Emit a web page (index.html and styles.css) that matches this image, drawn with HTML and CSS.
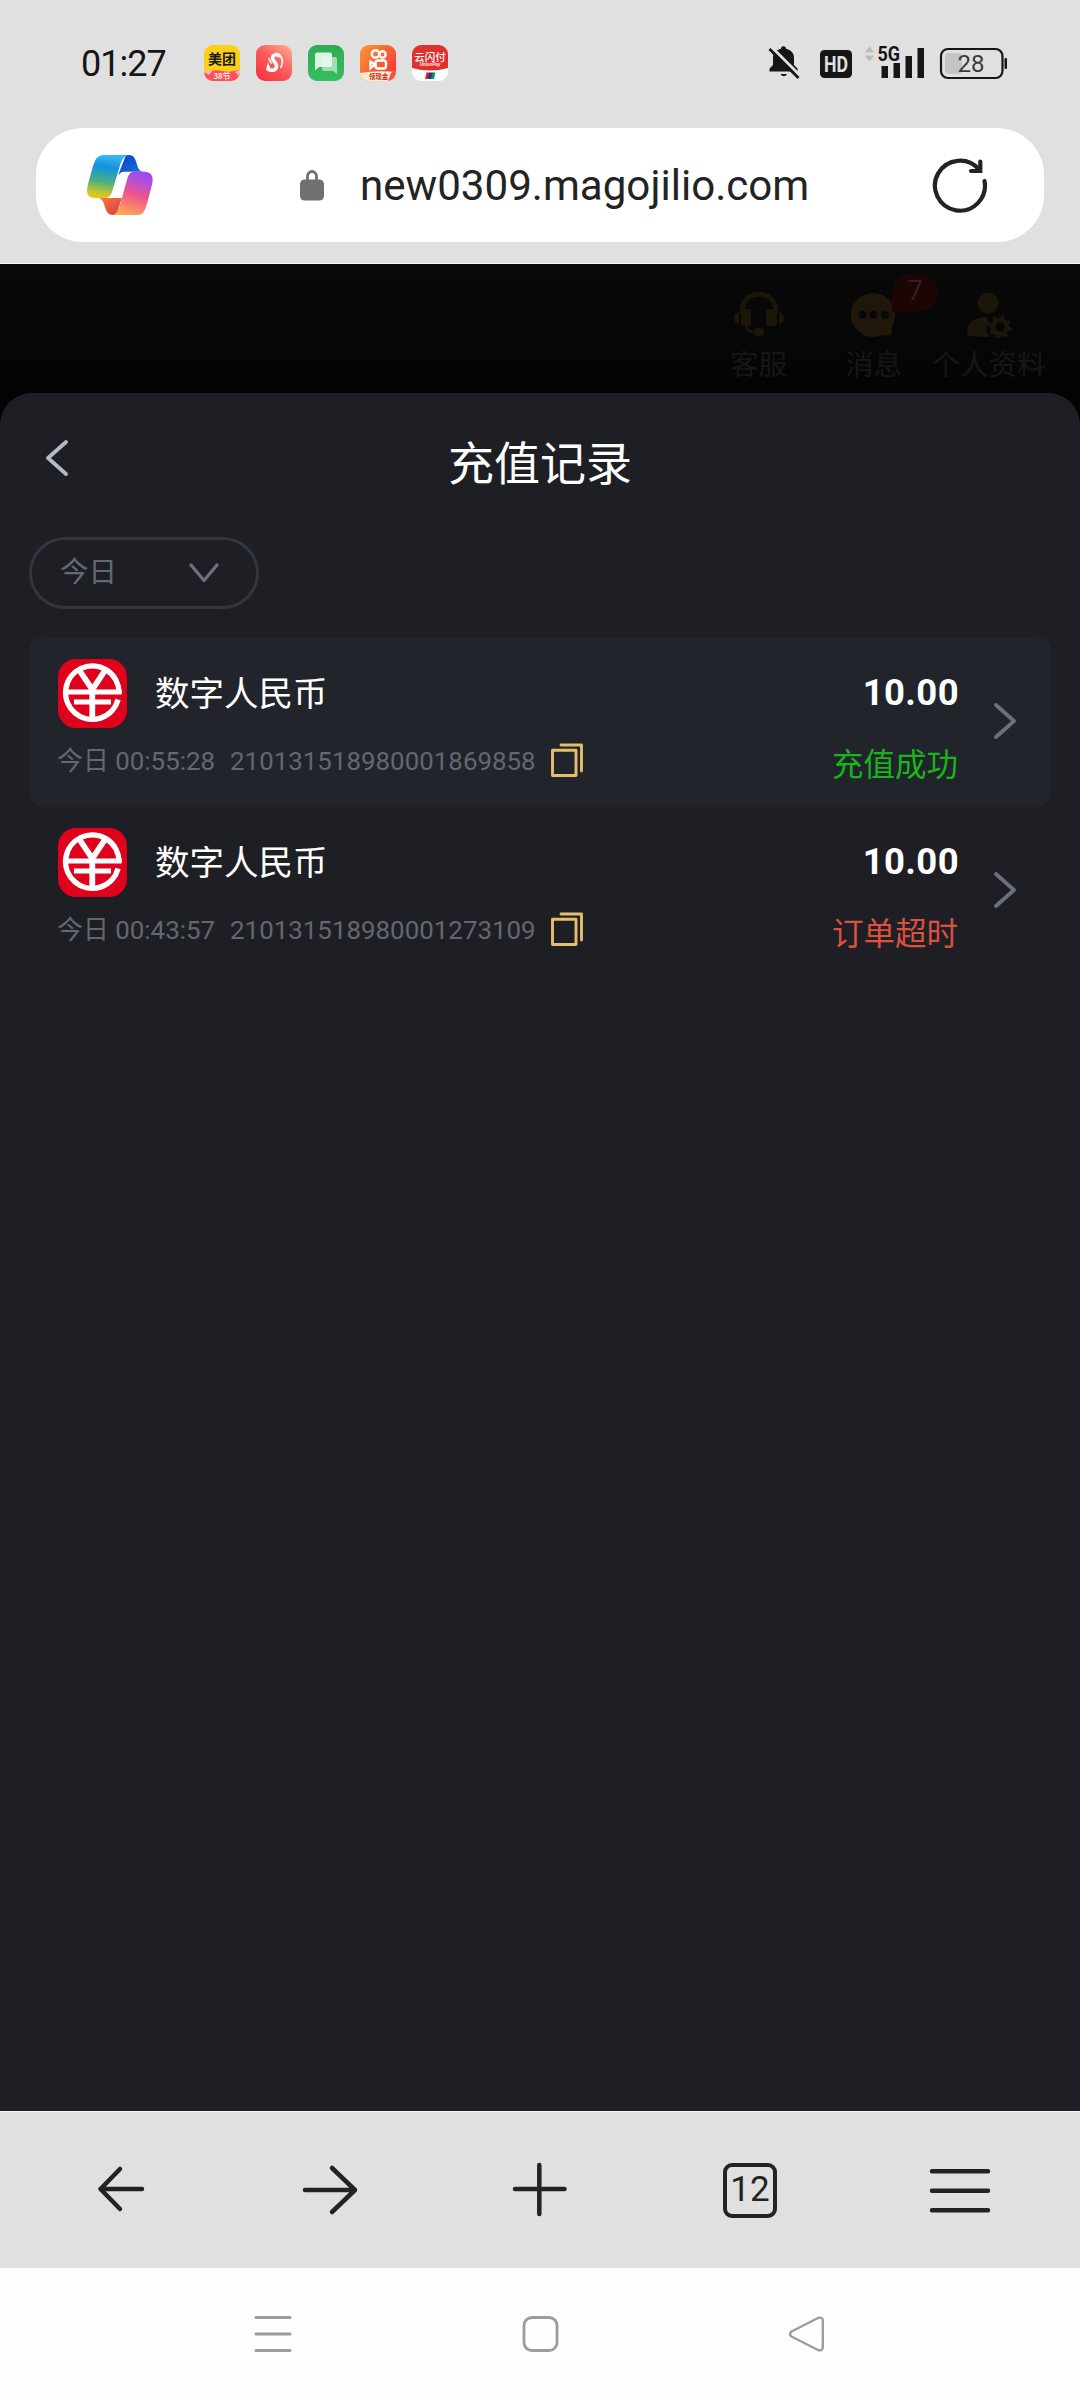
FILE: index.html
```html
<!DOCTYPE html>
<html lang="zh-CN">
<head>
<meta charset="utf-8">
<title>充值记录</title>
<link rel="stylesheet" href="styles.css">
</head>
<body>
<svg class="defs" width="0" height="0" aria-hidden="true">
  <symbol id="ecny" viewBox="0 0 69 69">
    <rect width="69" height="69" rx="18" fill="#e0021c"/>
    <path d="M61 33.700A26.700 26.700 0 1 0 60.100 40.500" fill="none" stroke="#fff" stroke-width="5.400"/>
    <path d="M21.500 11.500 34.300 30.500 47 11.500M34.300 28V61" fill="none" stroke="#fff" stroke-width="5.800"/>
    <path d="M9 32.900H63.700M16 43H53" fill="none" stroke="#fff" stroke-width="5"/>
  </symbol>
  <symbol id="copy" viewBox="0 0 32 35">
    <path d="M1.500 7.200H25V32.500H1.500zM10 2H30.500V28" fill="none" stroke="#e6bd6a" stroke-width="2.900" stroke-linejoin="round" stroke-linecap="round"/>
  </symbol>
  <symbol id="next" viewBox="0 0 22 36">
    <path d="M2 2 20 18 2 34" fill="none" stroke="#6b717c" stroke-width="3.700" stroke-linecap="round" stroke-linejoin="round"/>
  </symbol>
</svg>

<header class="status">
  <span class="clock">01:27</span>
  <div class="apps">
    <svg width="36" height="36" viewBox="0 0 36 36">
      <defs><clipPath id="r"><rect width="36" height="36" rx="9"/></clipPath></defs>
      <g clip-path="url(#r)"><rect width="36" height="36" fill="#fbd116"/><path d="M0 28q8-4 18-2t18-2v12H0z" fill="#f9525f"/><path d="M0 27q4-3 8-1l-3 4zM31 27l5-3v8z" fill="#ffb3b8"/></g>
      <text x="18" y="18.500" class="t-mt" text-anchor="middle">美团</text>
      <text x="18" y="33.500" class="t-38" text-anchor="middle">38节</text>
    </svg>
    <svg width="36" height="36" viewBox="0 0 36 36">
      <defs><linearGradient id="g2" x1="1" y1="0" x2="0.2" y2="1"><stop offset="0" stop-color="#ffb393"/><stop offset=".5" stop-color="#fb5d5e"/><stop offset="1" stop-color="#f7343f"/></linearGradient></defs>
      <rect width="36" height="36" rx="9" fill="url(#g2)"/>
      <path d="M23 10.500c-2-1.500-6.500-1-6.500 2.500s4.500 4.500 4 8.500-4 4.500-7 3" fill="none" stroke="#fff" stroke-width="3.600" stroke-linecap="round"/>
      <path d="M22.500 9.500c5 3 4.500 8.500 2.500 13M13 13.500q.5 2.500 2.500 4.500" fill="none" stroke="#fff" stroke-width="1.600" stroke-linecap="round"/>
      <path d="M12.500 17q-2 4.500-2.500 8 4 3 8 1.500-5-3-5.500-9.500z" fill="#fff"/>
    </svg>
    <svg width="36" height="36" viewBox="0 0 36 36">
      <defs><linearGradient id="g3" x1="0" y1="0" x2="0" y2="1"><stop offset="0" stop-color="#2eab53"/><stop offset="1" stop-color="#36bd60"/></linearGradient></defs>
      <rect width="36" height="36" rx="9" fill="url(#g3)"/>
      <path d="M16 12h11q2 0 2 2v15l-4-3h-9q-2 0-2-2V14q0-2 2-2z" fill="#a1deb3"/>
      <path d="M9 7.500h13q2 0 2 2v10.500q0 2-2 2H11l-4 3.500V9.500q0-2 2-2z" fill="#e7f8ec" fill-opacity=".95"/>
    </svg>
    <svg width="36" height="36" viewBox="0 0 36 36">
      <defs><linearGradient id="g4" x1="0" y1="0" x2="1" y2=".8"><stop offset="0" stop-color="#fb9a2d"/><stop offset="1" stop-color="#f5333c"/></linearGradient></defs>
      <g clip-path="url(#r)"><rect width="36" height="36" fill="url(#g4)"/><path d="M0 28q17-3 36-1v9H0z" fill="#fff0cf"/><path d="M31 28l5-4v12h-8z" fill="#f4513d"/></g>
      <g fill="none" stroke="#fff" stroke-width="2.400"><circle cx="15.500" cy="9" r="3.700"/><circle cx="22.500" cy="9.500" r="3.200"/><rect x="15.500" y="15.500" width="10.500" height="8" rx="2.500"/><path d="M15 19.500l-4.500-3v6.500z"/></g>
      <text x="18.500" y="34" class="t-ks" text-anchor="middle">领现金</text>
    </svg>
    <svg width="36" height="36" viewBox="0 0 36 36">
      <g clip-path="url(#r)"><rect width="36" height="36" fill="#fff"/><path d="M0 0h36v23q-18 5-36 0z" fill="#e2302e"/></g>
      <path d="M14.500 27.500h3.500l-1.500 6.500h-3.500z" fill="#c8243a"/><path d="M17.500 27.500h3.500l-1.500 6.500h-3.500z" fill="#143e70"/><path d="M20.500 27.500h3l-1.500 6.500h-3z" fill="#12837f"/>
      <text x="18" y="15.500" class="t-up" text-anchor="middle">云闪付</text>
      <text x="18" y="21" class="t-us" text-anchor="middle">UnionPay</text>
    </svg>
  </div>
  <svg class="sys" width="240" height="46" viewBox="768 39 240 46">
    <path d="M769.500 70.500v-3l3.500-3.500v-7q0-7.500 8-9.300a2.500 2.500 0 0 1 5 0q8 1.800 8 9.300v7l3.500 3.500v3z" fill="#161616"/>
    <path d="M780.500 73h6.500a3.300 2.600 0 0 1-6.500 0z" fill="#161616"/>
    <path d="M771 45.500 801 75.500" stroke="#e0e0e0" stroke-width="3"/>
    <path d="M769.500 48 798.500 77" stroke="#161616" stroke-width="2.800"/>
    <rect x="820" y="49" width="32" height="28" rx="4.500" fill="#161616"/>
    <text x="836" y="70.500" class="t-hd" text-anchor="middle" textLength="24" lengthAdjust="spacingAndGlyphs">HD</text>
    <path d="M864.500 51.500l5-6 5 6zM864.500 54.500l5 6 5-6z" fill="#bdbdbd"/>
    <text x="877.500" y="60" class="t-5g" textLength="22.500" lengthAdjust="spacingAndGlyphs">5G</text>
    <path d="M881.500 65h6.500v12h-6.500zM893.500 62h6.500v15h-6.500zM905.500 55h6.500v22h-6.500zM917.500 47h6.500v30h-6.500z" fill="#161616"/>
    <rect x="941" y="48" width="61.500" height="29" rx="7" fill="none" stroke="#161616" stroke-width="2.200"/>
    <rect x="945" y="52" width="17" height="21" rx="4" fill="#c4c4c4"/>
    <rect x="1004.500" y="57" width="2.500" height="11" rx="1" fill="#161616"/>
    <text x="971" y="71" class="t-bat" text-anchor="middle">28</text>
  </svg>
</header>

<div class="urlrow">
  <div class="urlbar">
    <svg class="copilot" width="68" height="62" viewBox="86 154 68 62">
      <defs>
        <linearGradient id="ca" x1=".3" y1="0" x2=".15" y2="1"><stop offset="0" stop-color="#35b8f1"/><stop offset=".25" stop-color="#1391e2"/><stop offset=".6" stop-color="#4caf7d"/><stop offset=".85" stop-color="#c3c52c"/><stop offset="1" stop-color="#f5c70e"/></linearGradient>
        <linearGradient id="cb" x1=".6" y1="0" x2=".3" y2="1"><stop offset="0" stop-color="#a948e8"/><stop offset=".15" stop-color="#ab51e0"/><stop offset=".5" stop-color="#ee558d"/><stop offset="1" stop-color="#ffaa53"/></linearGradient>
        <linearGradient id="cc" x1="0" y1="0" x2="1" y2="1"><stop offset="0" stop-color="#0a3ac8"/><stop offset="1" stop-color="#1b7de3"/></linearGradient>
        <linearGradient id="cd" x1="0" y1="0" x2="1" y2="1"><stop offset="0" stop-color="#fb7b3c"/><stop offset="1" stop-color="#d83b3f"/></linearGradient>
      </defs>
      <path d="M126 155h3c5 0 6.500 4 8 9.500 1.500 5 3 7.200 7.500 7.200H124q-4 0-6.500 5z" fill="url(#cc)"/>
      <path d="M122 198 116 215h-3c-5 0-6.500-3-8.500-9.500-1.500-5-3-7.500-7.500-7.500z" fill="url(#cd)"/>
      <path d="M103 155h27c-6 0-8.500 5-10.500 12l-7.500 25q-2 6-7 6H95c-7 0-9.500-4-7-14l5-18q3-11 10-11z" fill="url(#ca)"/>
      <path d="M139 215h-27c4 0 6.500-5 8.500-12l7-25q2-6.300 6-6.300h11c7 0 9.500 5 7.500 13l-5 19q-3 11.300-8 11.300z" fill="url(#cb)"/>
    </svg>
    <svg class="lock" width="24" height="31" viewBox="0 0 24 31"><rect y="9.500" width="24" height="21" rx="4.500" fill="#707070"/><path d="M7.500 11V6.500a4.500 5 0 0 1 9 0V11" fill="none" stroke="#707070" stroke-width="2.800"/></svg>
    <span class="url">new0309.magojilio.com</span>
    <svg class="reload" width="56" height="56" viewBox="932 157 56 56"><path d="M984.500 181A25 25 0 1 1 979 169.500" fill="none" stroke="#232323" stroke-width="4.200" stroke-linecap="round"/><path d="M980.300 161.500V171H971" fill="none" stroke="#232323" stroke-width="4.200" stroke-linecap="round"/></svg>
  </div>
</div>

<main class="page">
  <nav class="tools">
    <div class="tool">
      <svg width="50" height="46" viewBox="0 0 50 46" fill="#1b150a"><path d="M8 21C7-4 43-4 42 21" fill="none" stroke="#1b150a" stroke-width="5"/><rect x="7" y="17" width="10" height="17" rx="2"/><rect x="32" y="17" width="11" height="17" rx="2"/><path d="M5 20v12q-5-1-5-6t5-6zM45 20v12q5-1 5-6t-5-6z"/><path d="M12 34q1 6 8 6h3" fill="none" stroke="#1b150a" stroke-width="3"/><rect x="20" y="36" width="10" height="8" rx="4"/></svg>
      <span>客服</span>
    </div>
    <div class="tool tool-msg">
      <svg width="45" height="46" viewBox="0 0 45 46"><path d="M22 1a22 22 0 1 0 9 42q5 1 10 0-1-5 1-11A22 22 0 0 0 22 1z" fill="#1f180a"/><g fill="#080808"><circle cx="11.500" cy="23" r="4"/><circle cx="22.500" cy="23" r="4"/><circle cx="34" cy="23" r="4"/></g></svg>
      <span>消息</span>
      <b class="badge">7</b>
    </div>
    <div class="tool">
      <svg width="46" height="46" viewBox="0 0 46 46" fill="#1b150a"><circle cx="22" cy="11" r="10.500"/><path d="M1 43q-1-18 20-18 4 10-1 10 0 6 4 10-13 0-23-2z"/><circle cx="34" cy="35" r="7" fill="none" stroke="#1b150a" stroke-width="5"/><circle cx="34" cy="35" r="10.300" fill="none" stroke="#1b150a" stroke-width="3" stroke-dasharray="4 4.090"/></svg>
      <span>个人资料</span>
    </div>
  </nav>

  <section class="sheet">
    <div class="titlebar">
      <svg class="back" width="22" height="36" viewBox="0 0 22 36"><path d="M20 2 2 18 20 34" fill="none" stroke="#b4bac8" stroke-width="3.700" stroke-linecap="round" stroke-linejoin="round"/></svg>
      <h1>充值记录</h1>
    </div>
    <div class="filter">
      <span>今日</span>
      <svg width="30" height="20" viewBox="0 0 30 20"><path d="M2 2 15 17.500 28 2" fill="none" stroke="#6a717d" stroke-width="3.200" stroke-linecap="round" stroke-linejoin="round"/></svg>
    </div>
    <ul class="records">
      <li class="record record-alt">
        <div class="info">
          <div class="method"><svg width="69" height="69"><use href="#ecny"/></svg><span>数字人民币</span></div>
          <div class="meta"><span class="when">今日 00:55:28</span><span class="order">210131518980001869858</span><svg width="32" height="35"><use href="#copy"/></svg></div>
        </div>
        <div class="result"><strong>10.00</strong><span class="ok">充值成功</span></div>
        <svg class="next" width="22" height="36"><use href="#next"/></svg>
      </li>
      <li class="record">
        <div class="info">
          <div class="method"><svg width="69" height="69"><use href="#ecny"/></svg><span>数字人民币</span></div>
          <div class="meta"><span class="when">今日 00:43:57</span><span class="order">210131518980001273109</span><svg width="32" height="35"><use href="#copy"/></svg></div>
        </div>
        <div class="result"><strong>10.00</strong><span class="late">订单超时</span></div>
        <svg class="next" width="22" height="36"><use href="#next"/></svg>
      </li>
    </ul>
  </section>
</main>

<footer class="browserbar">
  <svg width="60" height="60" viewBox="91 2159 60 60"><path d="M142 2189H100.500M120 2169 100.500 2189l19.500 20"/></svg>
  <svg width="60" height="60" viewBox="300 2159 60 60"><path d="M305 2190H355M332 2168l23 22-23 22"/></svg>
  <svg width="60" height="60" viewBox="509 2159 60 60"><path d="M515 2189H564.500M539.300 2165v49"/></svg>
  <span class="tabs">12</span>
  <svg width="62" height="60" viewBox="929 2159 62 60"><path d="M932 2171.300h56M932 2190.700h56M932 2210.200h56"/></svg>
</footer>
<div class="sysnav">
  <svg width="38" height="38" viewBox="254 2315 38 38"><path d="M256 2317.500h34M256 2334h34M256 2350.400h34" stroke-width="3"/></svg>
  <svg width="38" height="38" viewBox="521 2315 38 38"><rect x="524" y="2317.500" width="33" height="33" rx="8" stroke-width="2.800"/></svg>
  <svg width="38" height="38" viewBox="788 2315 38 38"><path d="M818 2318 791.500 2331.500q-3 2.500 0 5L818 2350q4.800 1.500 4.800-3v-26q0-4.500-4.800-3z" stroke-width="2.400"/></svg>
</div>
</body>
</html>
```
FILE: styles.css
```css
* { box-sizing: border-box; }
body {
  margin: 0;
  width: 1080px;
  height: 2400px;
  display: flex;
  flex-direction: column;
  overflow: hidden;
  background: #e0e0e0;
  font-family: Roboto, "Noto Sans CJK SC", sans-serif;
}
svg { display: block; flex: none; }
.defs { position: absolute; }

.status {
  height: 128px;
  padding: 0 72px 3px 81px;
  display: flex;
  align-items: center;
}
.clock { width: 123px; padding-top: 3px; font-size: 36px; line-height: 1; letter-spacing: -1px; color: #161616; }
.apps { display: flex; gap: 16px; }
.sys { margin-left: auto; }
.t-mt { font: 700 14px "Noto Sans CJK SC", sans-serif; fill: #1a1a1a; }
.t-38 { font: 500 8px "Noto Sans CJK SC", sans-serif; fill: #fff; }
.t-ks { font: 700 6.500px "Noto Sans CJK SC", sans-serif; fill: #c92b1e; }
.t-up { font: 500 10.500px "Noto Sans CJK SC", sans-serif; fill: #fff; }
.t-us { font: italic 500 5px Roboto, sans-serif; fill: #fff; }
.t-hd { font: 700 21.500px Roboto, sans-serif; fill: #e0e0e0; }
.t-5g { font: 700 21px Roboto, sans-serif; fill: #161616; }
.t-bat { font: 400 24px Roboto, sans-serif; fill: #3c3c3c; }

.urlrow { height: 136px; padding: 0 36px; border-bottom: 1px solid #f4f4f4; }
.urlbar {
  height: 114px;
  padding: 0 56px 0 50px;
  border-radius: 47px;
  background: #fff;
  display: flex;
  align-items: center;
}
.lock { margin-left: 146px; }
.url { margin-left: 36px; padding-top: 2px; font-size: 42.100px; line-height: 50px; color: #232323; }
.reload { margin-left: auto; }

.page {
  height: 1847px;
  background: linear-gradient(#080808, #030504 129px, #000 160px);
}
.tools {
  height: 129px;
  padding: 28px 34px 0 0;
  display: flex;
  justify-content: flex-end;
}
.tool {
  width: 115px;
  display: flex;
  flex-direction: column;
  align-items: center;
  gap: 9px;
  font-size: 28.500px;
  line-height: 38px;
  color: #151717;
  white-space: nowrap;
}
.tool-msg { position: relative; }
.badge {
  position: absolute;
  left: 76px;
  top: -18px;
  width: 46px;
  height: 38px;
  border-radius: 19px 19px 19px 0;
  background: #1c0505;
  color: #302020;
  font-weight: 400;
  font-size: 28px;
  line-height: 34px;
  text-align: center;
}

.sheet {
  height: 1718px;
  padding: 0 29px;
  border-radius: 32px 32px 0 0;
  background: #1e1f24;
}
.titlebar {
  height: 144px;
  padding-left: 17px;
  display: grid;
  grid-template-columns: 22px 1fr 39px;
}
.back { margin-top: 47px; }
h1 {
  margin: 38px 0 0;
  font-size: 46px;
  line-height: 66px;
  font-weight: 400;
  text-align: center;
  color: #fff;
}
.filter {
  width: 230px;
  height: 72px;
  padding: 0 37px 0 28px;
  border: 3px solid #31363f;
  border-radius: 36px;
  display: flex;
  align-items: center;
  justify-content: space-between;
  font-size: 28.500px;
  line-height: 40px;
  color: #646a75;
}
.filter span { margin-bottom: 1px; }
.records { margin: 28px 0 0; padding: 0; list-style: none; }
.record {
  height: 169px;
  padding: 22px 35px 0 29px;
  border-radius: 13px;
  display: flex;
}
.record-alt { background: #21242b; }
.method {
  height: 69px;
  display: flex;
  align-items: center;
  gap: 28px;
  font-size: 34.500px;
  line-height: 50px;
  color: #fff;
}
.meta {
  margin-top: 15px;
  height: 35px;
  display: flex;
  align-items: center;
  font-size: 25.900px;
  line-height: 35px;
  color: #626771;
}
.meta span { padding-top: 2px; }
.when { margin-left: -1px; }
.order { margin: 0 15px; }
.result {
  margin-left: auto;
  display: flex;
  flex-direction: column;
  align-items: flex-end;
}
.result strong { margin: 13px -1px 0 0; font-size: 36.500px; line-height: 42px; font-weight: 700; letter-spacing: 0.400px; color: #fff; }
.result span { margin-top: 29px; font-size: 31.500px; line-height: 46px; }
.ok { color: #19b41b; }
.late { color: #dd4f3f; }
.next { margin: 44px 0 0 36px; }

.browserbar {
  height: 157px;
  padding: 0 89px 2px 91px;
  border-top: 1px solid #f6f6f6;
  display: flex;
  align-items: center;
  gap: 149px;
}
.browserbar svg { fill: none; stroke: #232323; stroke-width: 4.500; stroke-linecap: round; stroke-linejoin: round; }
.tabs {
  flex: none;
  width: 54px;
  height: 55px;
  margin: 2px 3px 0 5px;
  border: 4px solid #232323;
  border-radius: 9px;
  font-size: 35px;
  line-height: 46px;
  text-align: center;
  color: #232323;
}
.sysnav {
  flex: 1;
  padding: 0 254px 0 254px;
  background: #fdfdfd;
  display: flex;
  align-items: center;
  justify-content: space-between;
}
.sysnav svg { fill: none; stroke: #9c9c9c; stroke-linecap: round; stroke-linejoin: round; }
```
